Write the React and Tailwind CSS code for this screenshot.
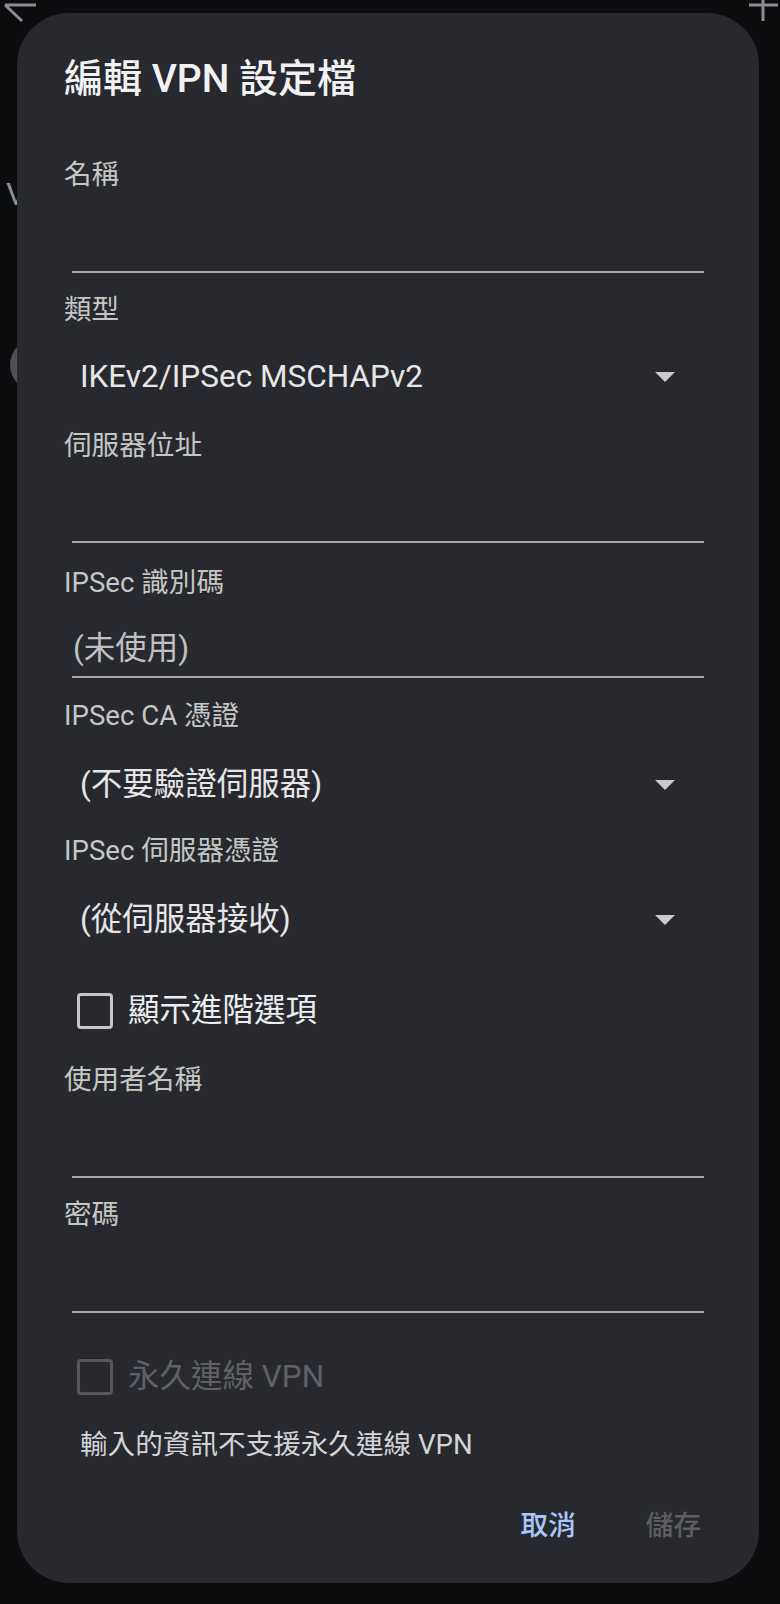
import React from "react";

const font = { fontFamily: '"Roboto", "Noto Sans CJK TC", sans-serif' };

const Label = ({ children, className = "" }) => (
    <div className={"h-[36px] leading-[36px] text-[27.6px] text-[#c4c7c5] pl-[47px] whitespace-nowrap " + className}>
        {children}
    </div>
);

const Underline = ({ className = "" }) => (
    <div className={"ml-[55px] w-[632px] h-[2px] bg-[#a7a9ad] " + className} />
);

const Caret = () => (
    <svg width="20" height="10" viewBox="0 0 20 10" className="shrink-0">
        <path d="M0 0 L20 0 L10 10 Z" fill="#c9cbcf" />
    </svg>
);

const Spinner = ({ value, className = "" }) => (
    <div className={"h-[40px] flex items-center justify-between pl-[63px] pr-[84px] " + className}>
        <span className="text-[31.5px] leading-[40px] text-[#e6e6e8] whitespace-nowrap">{value}</span>
        <Caret />
    </div>
);

const Check = ({ label, disabled, className = "" }) => (
    <div className={"h-[40px] flex items-center pl-[60px] " + className}>
        <div className={"w-[36px] h-[36px] rounded-[4px] border-[3px] " + (disabled ? "border-[#56585c]" : "border-[#c4c7c5]")} />
        <span className={"ml-[15px] text-[31.5px] leading-[40px] whitespace-nowrap " + (disabled ? "text-[#5f6165]" : "text-[#eceef0]")}>
            {label}
        </span>
    </div>
);

export default function App() {
    return (
        <div style={font} className="relative w-[780px] h-[1604px] bg-[#0c0d0f] overflow-hidden">
            {/* app behind the dialog */}
            <svg className="absolute left-0 top-0" width="40" height="24" viewBox="0 0 40 24">
                <path d="M5 5 H36 M5 5 L22 21" stroke="#8c8d90" strokeWidth="3" fill="none" />
            </svg>
            <svg className="absolute left-[745px] top-0" width="35" height="24" viewBox="0 0 35 24">
                <path d="M18 0 V21 M4 5 H33" stroke="#8c8d90" strokeWidth="3" fill="none" />
            </svg>
            <div className="absolute left-[6px] top-[176px] text-[32px] leading-[36px] text-[#8e8f92]">V</div>
            <div className="absolute left-[10px] top-[338px] w-[54px] h-[54px] rounded-full bg-[#4f5054]" />

            <div className="relative z-10 ml-[17px] mt-[13px] w-[742px] h-[1570px] rounded-[52px] bg-[#28292e] flex flex-col">
                <div className="mt-[42px] pl-[47px] h-[48px] leading-[48px] text-[39px] font-medium text-[#f1f1f3] whitespace-nowrap">
                    編輯 VPN 設定檔
                </div>

                <Label className="mt-[54px]">名稱</Label>
                <Underline className="mt-[78px]" />

                <Label className="mt-[19px]">類型</Label>
                <Spinner className="mt-[29px]" value="IKEv2/IPSec MSCHAPv2" />

                <Label className="mt-[31px]">伺服器位址</Label>
                <Underline className="mt-[77px]" />

                <Label className="mt-[22px]">IPSec 識別碼</Label>
                <div className="mt-[28px] h-[40px] leading-[40px] pl-[56px] text-[31.5px] text-[#bfc1c4]">(未使用)</div>
                <Underline className="mt-[7px]" />

                <Label className="mt-[20px]">IPSec CA 憑證</Label>
                <Spinner className="mt-[31px]" value="(不要驗證伺服器)" />

                <Label className="mt-[28px]">IPSec 伺服器憑證</Label>
                <Spinner className="mt-[31px]" value="(從伺服器接收)" />

                <Check className="mt-[51px]" label="顯示進階選項" />

                <Label className="mt-[31px]">使用者名稱</Label>
                <Underline className="mt-[78px]" />

                <Label className="mt-[19px]">密碼</Label>
                <Underline className="mt-[78px]" />

                <Check className="mt-[44px]" label="永久連線 VPN" disabled />

                <div className="mt-[30px] h-[36px] leading-[36px] pl-[63px] text-[27.6px] text-[#d2d4d7] whitespace-nowrap">
                    輸入的資訊不支援永久連線 VPN
                </div>

                <div className="mt-[43px] h-[40px] flex items-center justify-end pr-[58px] gap-[70px] text-[27.6px] font-medium">
                    <button className="text-[#a8c7fa]">取消</button>
                    <button className="text-[#5c5e62]">儲存</button>
                </div>
            </div>
        </div>
    );
}
